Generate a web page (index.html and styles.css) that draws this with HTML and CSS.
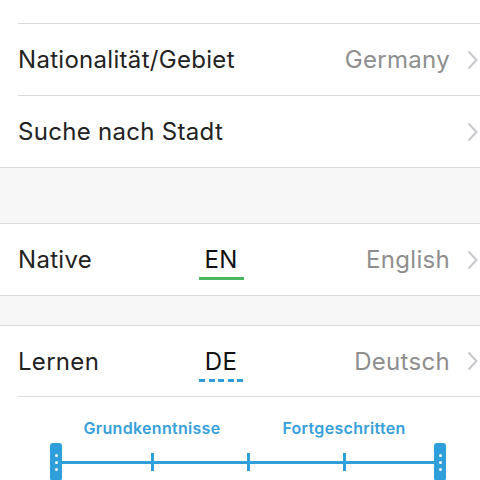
FILE: index.html
```html
<!DOCTYPE html>
<html lang="de">
<head>
    <meta charset="UTF-8">
    <meta name="viewport" content="width=device-width, initial-scale=1.0">
    <title>Sprachen</title>
    <link rel="stylesheet" href="styles.css">
</head>
<body>
    <div class="lead"></div>

    <div class="group first">
        <div class="row inset">
            <span class="label">Nationalität/Gebiet</span>
            <span class="value">Germany</span>
            <svg class="chevron" width="11" height="20" viewBox="0 0 11 20"><polyline points="1.5,1.5 9.5,10 1.5,18.5" fill="none" stroke="#c7c7cc" stroke-width="2"/></svg>
        </div>
        <div class="row inset">
            <span class="label">Suche nach Stadt</span>
            <svg class="chevron" width="11" height="20" viewBox="0 0 11 20"><polyline points="1.5,1.5 9.5,10 1.5,18.5" fill="none" stroke="#c7c7cc" stroke-width="2"/></svg>
        </div>
    </div>

    <div class="spacer tall"></div>

    <div class="group">
        <div class="row">
            <span class="label fixed">Native</span>
            <span class="code">
                <span class="code-text">EN</span>
                <span class="code-line native"></span>
            </span>
            <span class="value">English</span>
            <svg class="chevron" width="11" height="20" viewBox="0 0 11 20"><polyline points="1.5,1.5 9.5,10 1.5,18.5" fill="none" stroke="#c7c7cc" stroke-width="2"/></svg>
        </div>
    </div>

    <div class="spacer"></div>

    <div class="group open">
        <div class="row short">
            <span class="label fixed">Lernen</span>
            <span class="code">
                <span class="code-text">DE</span>
                <span class="code-line learning"></span>
            </span>
            <span class="value">Deutsch</span>
            <svg class="chevron" width="11" height="20" viewBox="0 0 11 20"><polyline points="1.5,1.5 9.5,10 1.5,18.5" fill="none" stroke="#c7c7cc" stroke-width="2"/></svg>
        </div>
        <div class="level">
            <div class="level-labels">
                <span class="level-name">Grundkenntnisse</span>
                <span></span>
                <span class="level-name">Fortgeschritten</span>
            </div>
            <div class="scale">
                <span class="slot"><span class="handle"><i></i><i></i><i></i></span></span>
                <span class="slot"><span class="tick"></span></span>
                <span class="slot"><span class="tick"></span></span>
                <span class="slot"><span class="tick"></span></span>
                <span class="slot"><span class="handle"><i></i><i></i><i></i></span></span>
            </div>
        </div>
    </div>
</body>
</html>
```

FILE: styles.css
```css
body {
    margin: 0;
    font-family: Inter, "Liberation Sans", sans-serif;
    background-color: white;
    color: #222;
    overflow: hidden;
}

.lead {
    height: 23px;
}

.group {
    background-color: white;
    border-top: 1px solid #dadada;
    border-bottom: 1px solid #dadada;
}

.group.first {
    border-top: none;
}

.group.open {
    border-bottom: none;
}

.row {
    display: flex;
    align-items: center;
    height: 71px;
    margin-left: 18px;
    padding-right: 2px;
    font-size: 24px;
    letter-spacing: 0.3px;
}

.row.inset {
    border-top: 1px solid #dadada;
}

.row.short {
    height: 70px;
    border-bottom: 1px solid #dadada;
}

.label {
    flex: 1;
}

.label.fixed {
    flex: none;
    width: 180px;
}

.value {
    margin-left: auto;
    color: #8e8e8e;
}

.chevron {
    margin-left: 17px;
}

.code {
    display: flex;
    flex-direction: column;
    align-items: center;
    width: 46px;
    margin-top: 7px;
}

.code-text {
    color: #111;
    line-height: 28px;
}

.code-line {
    width: 45px;
    height: 3px;
    margin-top: 3px;
}

.code-line.native {
    background-color: #4cb85c;
}

.code-line.learning {
    background: repeating-linear-gradient(90deg, #2e9fdb 0 6px, transparent 6px 9.6px);
}

.spacer {
    height: 29px;
    background-color: #f7f7f7;
}

.spacer.tall {
    height: 55px;
}

.level {
    padding-top: 21px;
}

.level-labels {
    display: grid;
    grid-template-columns: repeat(3, 96px);
    margin-left: 104px;
    height: 20px;
}

.level-name {
    display: flex;
    justify-content: center;
    white-space: nowrap;
    font-size: 16px;
    font-weight: 600;
    letter-spacing: 0.3px;
    line-height: 20px;
    color: #35a0da;
}

.scale {
    display: flex;
    justify-content: space-between;
    align-items: center;
    margin: 5px 34px 0 50px;
    height: 38px;
    background: linear-gradient(#2e9fdb, #2e9fdb) no-repeat center / calc(100% - 12px) 3px;
}

.slot {
    display: flex;
    justify-content: center;
    width: 12px;
}

.tick {
    width: 3px;
    height: 18px;
    background-color: #2e9fdb;
}

.handle {
    display: flex;
    flex-direction: column;
    align-items: center;
    justify-content: center;
    gap: 4px;
    width: 12px;
    height: 38px;
    border-radius: 3px;
    background-color: #2e9fdb;
}

.handle i {
    width: 3px;
    height: 3px;
    border-radius: 50%;
    background-color: white;
}
```
